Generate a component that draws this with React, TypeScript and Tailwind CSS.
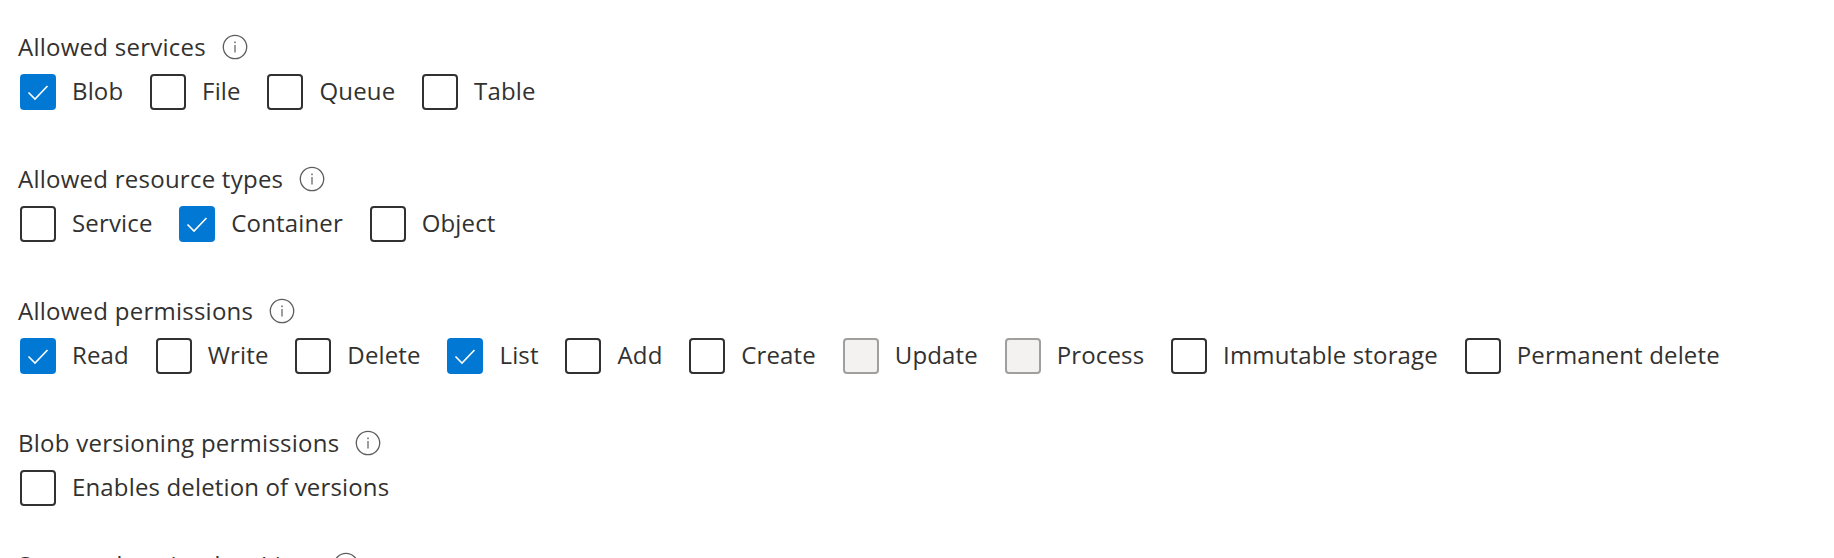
import { Fragment } from "react";

type Option = { label: string; checked?: boolean; disabled?: boolean };

const sections: { title: string; options: Option[] }[] = [
  {
    title: "Allowed services",
    options: [{ label: "Blob", checked: true }, { label: "File" }, { label: "Queue" }, { label: "Table" }],
  },
  {
    title: "Allowed resource types",
    options: [{ label: "Service" }, { label: "Container", checked: true }, { label: "Object" }],
  },
  {
    title: "Allowed permissions",
    options: [
      { label: "Read", checked: true },
      { label: "Write" },
      { label: "Delete" },
      { label: "List", checked: true },
      { label: "Add" },
      { label: "Create" },
      { label: "Update", disabled: true },
      { label: "Process", disabled: true },
      { label: "Immutable storage" },
      { label: "Permanent delete" },
    ],
  },
  {
    title: "Blob versioning permissions",
    options: [{ label: "Enables deletion of versions" }],
  },
];

const InfoIcon = () => (
  <svg width="26" height="26" viewBox="0 0 26 26" fill="none" className="shrink-0">
    <circle cx="13" cy="13" r="11.7" stroke="#605e5c" strokeWidth="1.3" />
    <rect x="12.4" y="11" width="1.2" height="7.5" fill="#605e5c" />
    <rect x="12.3" y="7.5" width="1.4" height="1.7" fill="#605e5c" />
  </svg>
);

const Checkbox = ({ label, checked, disabled }: Option) => {
  let box = "border-2 border-[#323130] bg-white";
  if (checked) box = "bg-[#0078d4]";
  if (disabled) box = "border-2 border-[#a19f9d] bg-[#f3f2f1]";

  return (
    <div className="flex items-center gap-4">
      <div className={`w-9 h-9 rounded-[4px] flex items-center justify-center ${box}`}>
        {checked && (
          <svg width="24" height="24" viewBox="0 0 24 24" fill="none">
            <path d="M2.5 12.5 L9 19 L21.5 6" stroke="#ffffff" strokeWidth="1.6" />
          </svg>
        )}
      </div>
      <span className="-mt-0.5">{label}</span>
    </div>
  );
};

const Title = ({ text }: { text: string }) => (
  <div className="flex items-center gap-4 -ml-0.5 h-9">
    <span className="tracking-[0.25px]">{text}</span>
    <InfoIcon />
  </div>
);

export default function App() {
  return (
    <div className="h-[558px] overflow-hidden bg-white pl-5 pt-[29px] text-[24px] leading-[36px] text-[#323130] font-['Open_Sans','Noto_Sans',sans-serif] tracking-[0.15px]">
      {sections.map((section) => (
        <Fragment key={section.title}>
          <Title text={section.title} />
          <div className="flex items-center gap-[26.8px] mt-[9px] mb-[51px]">
            {section.options.map((option) => (
              <Checkbox key={option.label} {...option} />
            ))}
          </div>
        </Fragment>
      ))}
      <div className="-mt-[10px]">
        <Title text="Start and expiry date/time" />
      </div>
    </div>
  );
}
